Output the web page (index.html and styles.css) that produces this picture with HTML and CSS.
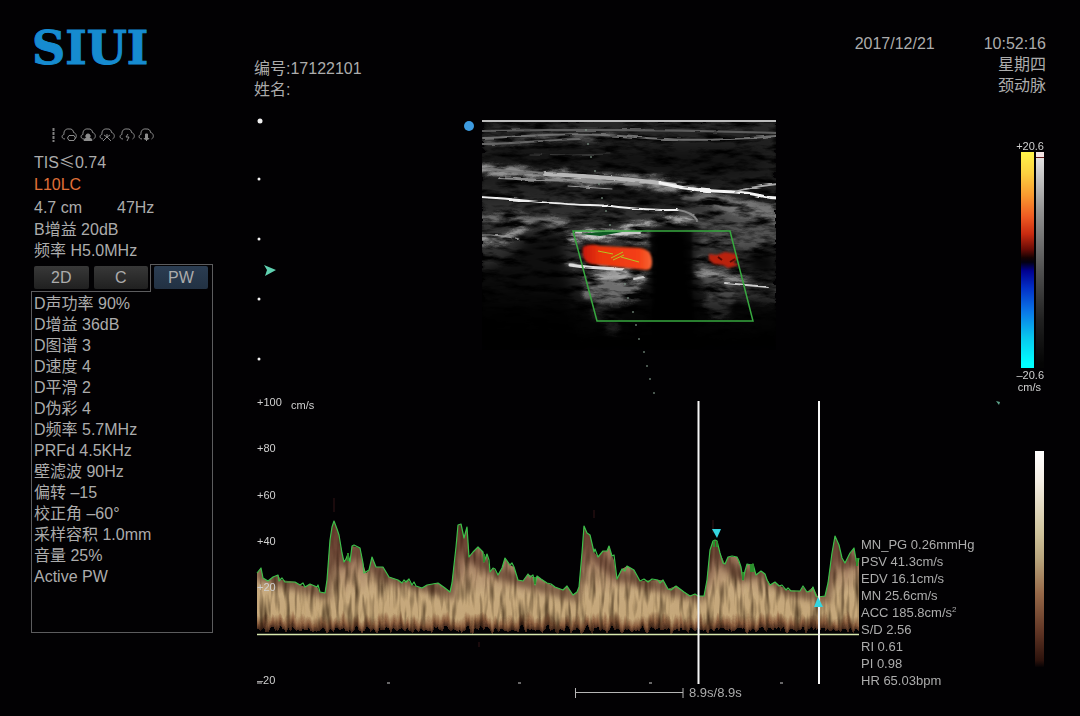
FILE: index.html
```html
<!DOCTYPE html>
<html lang="zh-CN">
<head>
<meta charset="utf-8">
<meta name="viewport" content="width=device-width, initial-scale=1">
<title>SIUI 颈动脉 PW</title>
<link rel="stylesheet" href="styles.css">
</head>
<body>
<div class="app">
  <aside class="sidebar">
    <div class="logo">SIUI</div>
    <svg class="status-icons" viewBox="0 0 106 16" width="106" height="16" aria-hidden="true">
      <defs>
        <path id="cloud" d="M4 12C0.500 12 0 8 3 7.500C2.500 3.500 5 1.500 8 2C11 1.500 12.500 3.500 12.500 5.500C15.500 6 16.500 10.500 13.500 12"/>
      </defs>
      <path class="grip" d="M2.500 1V15"/>
      <g class="icon-line">
        <g><use href="#cloud" x="10"/><path d="M18 8.500h5l1.500 2.500l-1.500 2.500h-5l-1.500 -2.500z"/></g>
        <g><use href="#cloud" x="29"/><path class="solid" d="M37 7a2 2 0 0 1 1.500 3.500l2.500 2v1h-8v-1l2.500-2a2 2 0 0 1 1.500-3.500z"/></g>
        <g><use href="#cloud" x="48"/><path d="M52 14l4 -4v-3M60 14l-4 -4M53 8l3 2l3 -2"/></g>
        <g><use href="#cloud" x="68"/><path d="M77 7l-2 3h3l-2 4"/></g>
        <g><use href="#cloud" x="87"/><path class="solid" d="M94.500 7h2v4h-2zM93 11c0 2 5 2 5 0M95.500 12v2"/></g>
      </g>
    </svg>
    <div class="probe">
      <p class="line">TIS<span class="wide">≤</span>0.74</p>
      <p class="line accent">L10LC</p>
      <p class="line pair"><span>4.7 cm</span><span>47Hz</span></p>
    </div>
    <p class="row">B增益 20dB</p>
    <p class="row">频率 H5.0MHz</p>
    <div class="tabs">
      <div class="tabs-idle">
        <button class="tab" type="button">2D</button>
        <button class="tab" type="button">C</button>
      </div>
      <div class="tabs-current">
        <button class="tab tab-on" type="button">PW</button>
      </div>
    </div>
    <div class="panel">
      <p class="row">D声功率 90%</p>
      <p class="row">D增益 36dB</p>
      <p class="row">D图谱 3</p>
      <p class="row">D速度 4</p>
      <p class="row">D平滑 2</p>
      <p class="row">D伪彩 4</p>
      <p class="row">D频率 5.7MHz</p>
      <p class="row">PRFd 4.5KHz</p>
      <p class="row">壁滤波 90Hz</p>
      <p class="row">偏转 –15</p>
      <p class="row">校正角 –60°</p>
      <p class="row">采样容积 1.0mm</p>
      <p class="row">音量 25%</p>
      <p class="row">Active PW</p>
    </div>
  </aside>

  <main class="main">
    <header class="header">
      <div class="patient">
        <p class="row">编号:17122101</p>
        <p class="row">姓名:</p>
      </div>
      <div class="exam">
        <p class="row stamp"><span>2017/12/21</span><span>10:52:16</span></p>
        <p class="row">星期四</p>
        <p class="row">颈动脉</p>
      </div>
    </header>

    <section class="scan">
      <svg class="scan-view" viewBox="253 112 747 284" role="img" aria-label="B+C">
        <defs>
          <filter id="tissue" x="482" y="120" width="294" height="240" filterUnits="userSpaceOnUse" color-interpolation-filters="sRGB">
            <feTurbulence type="fractalNoise" baseFrequency="0.04 0.14" numOctaves="5" seed="7" result="n"/>
            <feColorMatrix in="n" values="3 0 0 0 -0.750  3 0 0 0 -0.750  3 0 0 0 -0.750  0 0 0 0 1" result="g"/>
            <feGaussianBlur in="SourceGraphic" stdDeviation="2.200" result="b"/>
            <feDisplacementMap in="b" in2="n" scale="12" xChannelSelector="G" yChannelSelector="B" result="d"/>
            <feComposite in="d" in2="g" operator="arithmetic" k1="1.100" k2="0.050"/>
          </filter>
          <filter id="fascia" x="-5%" y="-30%" width="110%" height="160%" color-interpolation-filters="sRGB">
            <feTurbulence type="fractalNoise" baseFrequency="0.04 0.3" numOctaves="3" seed="3" result="n"/>
            <feGaussianBlur in="SourceGraphic" stdDeviation="0.600" result="b"/>
            <feDisplacementMap in="b" in2="n" scale="3" xChannelSelector="G" yChannelSelector="B"/>
          </filter>
          <filter id="soft"><feGaussianBlur stdDeviation="6"/></filter>
          <filter id="edge"><feGaussianBlur stdDeviation="0.800"/></filter>
          <linearGradient id="depth" x1="0" y1="0" x2="0" y2="1">
            <stop offset="0" stop-color="#242424"/><stop offset="0.120" stop-color="#1c1c1c"/>
            <stop offset="0.250" stop-color="#181818"/><stop offset="0.400" stop-color="#2a2a2a"/>
            <stop offset="0.650" stop-color="#2a2a2a"/><stop offset="0.850" stop-color="#0c0c0c"/>
            <stop offset="1" stop-color="#000"/>
          </linearGradient>
          <linearGradient id="flow" x1="0" y1="0" x2="1" y2="0">
            <stop offset="0" stop-color="#c81808"/><stop offset="0.250" stop-color="#ea360e"/>
            <stop offset="0.800" stop-color="#f43f15"/><stop offset="1" stop-color="#f56636"/>
          </linearGradient>
          <clipPath id="frame"><path d="M482 120H776V350H482Z"/></clipPath>
        </defs>

        <g clip-path="url(#frame)">
          <g filter="url(#tissue)">
            <path d="M482 120H776V345H482Z" fill="url(#depth)"/>
            <g fill="none" stroke-linecap="round">
              <path d="M482 170C520 170 540 178 600 180S660 184 690 190" stroke="#808080" stroke-width="10"/>
              <path d="M482 142C540 139 570 135 610 137" stroke="#555" stroke-width="5"/>
              <path d="M690 198Q730 205 776 216" stroke="#666" stroke-width="16"/>
              <path d="M690 212Q720 225 776 235" stroke="#484848" stroke-width="20"/>
              <path d="M482 238Q505 244 518 230T565 224" stroke="#888" stroke-width="7"/>
              <path d="M482 218Q525 214 560 228" stroke="#606060" stroke-width="8"/>
              <path d="M572 238Q612 231 650 238" stroke="#bbb" stroke-width="8"/>
              <path d="M622 230Q660 216 690 222" stroke="#bbb" stroke-width="5"/>
              <path d="M570 264Q610 266 645 276" stroke="#999" stroke-width="6"/>
              <path d="M586 278Q615 278 640 279" stroke="#909090" stroke-width="10"/>
              <path d="M592 290Q620 294 630 294" stroke="#606060" stroke-width="20"/>
              <path d="M600 310Q610 320 612 326" stroke="#333" stroke-width="16"/>
              <path d="M706 240Q745 238 760 250" stroke="#484848" stroke-width="14"/>
              <path d="M708 268Q725 284 718 305" stroke="#444" stroke-width="28"/>
              <path d="M698 273Q735 276 768 286" stroke="#999" stroke-width="4"/>
              <path d="M745 292H776" stroke="#2c2c2c" stroke-width="24"/>
            </g>
          </g>
          <g filter="url(#soft)" fill="#000">
            <path d="M650 228H690L696 340H648Z"/>
            <path d="M526 236L562 232L578 345H470V270Q515 265 526 236Z" opacity="0.700"/>
            <path d="M490 150H760V166L700 174L560 162H490Z" opacity="0.400"/>
            <path d="M745 252H776V276L750 272Z" opacity="0.850"/>
            <path d="M600 190L690 200L740 226L680 206L600 198Z" opacity="0.700"/>
            <path d="M640 300H790V360H470V310H580Z" opacity="0.500"/>
          </g>
          <path d="M650 231H692V318H655Z" fill="#000" opacity="0.600" filter="url(#edge)"/>
          <g filter="url(#fascia)" fill="none" stroke-linecap="round">
            <path d="M482 131Q630 128 776 133" stroke="#5c5c5c" stroke-width="2"/>
            <path d="M482 138C540 136 570 132 620 136S700 142 776 136" stroke="#707070" stroke-width="2"/>
            <path d="M482 144C520 144 540 140 580 139" stroke="#666" stroke-width="2"/>
            <path d="M530 154Q570 156 610 154" stroke="#383838" stroke-width="1"/>
            <path d="M482 168C515 172 540 174 565 175" stroke="#777" stroke-width="2"/>
            <path d="M500 178C540 181 580 180 625 182" stroke="#8c8c8c" stroke-width="2"/>
            <path d="M545 174C590 176 640 180 675 185" stroke="#b8b8b8" stroke-width="4"/>
            <path d="M660 183C690 190 710 191 735 192S760 198 778 198" stroke="#f4f4f4" stroke-width="3"/>
            <path d="M735 192Q750 187 778 184" stroke="#aaa" stroke-width="2"/>
            <path d="M480 197C520 199 560 205 590 205S620 210 678 210" stroke="#eee" stroke-width="2"/>
            <path d="M678 210Q692 212 697 220" stroke="#888" stroke-width="2"/>
            <path d="M570 265Q590 268 622 269" stroke="#ddd" stroke-width="3"/>
            <path d="M634 279L643 277M576 232L640 233M725 283L768 287" stroke="#ccc" stroke-width="2"/>
            <path d="M482 235Q500 234 519 240M568 186L612 189" stroke="#999" stroke-width="1"/>
          </g>
          <path d="M482 121H776" stroke="#bdbdbd" stroke-width="2"/>
          <path d="M580 234Q600 231 622 232L600 236Z" fill="#0c5a22"/>
        </g>

        <path d="M583 247Q590 243 600 246L640 248Q651 249 652 260Q653 270 646 270L592 264Q581 262 583 247Z" fill="url(#flow)" filter="url(#edge)"/>
        <path d="M709 254L717 255L725 252L736 254L738 259L733 262L739 265L728 268L723 265L714 264L709 260Z" fill="#b92010" filter="url(#edge)"/>
        <path d="M730 262l5 -3M718 257l4 3" stroke="#5a0a04" stroke-width="2"/>
        <path d="M598 251L613 254M621 257L639 262M611 258L623 252M613 260L624 255" fill="none" stroke="#b5c520" stroke-width="1"/>
        <path d="M573 231H730L753 321H597Z" fill="none" stroke="#37a83f" stroke-width="1.500"/>
        <path class="beam" d="M586 130h0M588 144h0M591 157h0M595 171h0M599 184h0M602 198h0M606 211h0M610 225h0M625 284h0M628 298h0M633 312h0M636 325h0M639 339h0M644 352h0M647 366h0M650 379h0M654 393h0"/>
        <g fill="#f0f0f0">
          <circle cx="260" cy="121" r="2.500"/><circle cx="259" cy="179" r="1.500"/><circle cx="259" cy="239" r="1.500"/>
          <circle cx="259" cy="299" r="1.500"/><circle cx="259" cy="359" r="1.500"/>
        </g>
        <circle cx="469" cy="126" r="5" fill="#3d9be0"/>
        <path d="M264 265L276 270L265 276L267 270Z" fill="#5fd0b0"/>
        <path d="M996 401l4 1l-1 3z" fill="#5fa48c"/>
      </svg>
      <div class="color-map">
        <span class="map-label">+20.6</span>
        <div class="map-bars"><div class="bar-velocity"></div><div class="bar-gray"></div></div>
        <span class="map-label">–20.6</span>
        <span class="map-label map-unit">cm/s</span>
      </div>
    </section>

    <section class="spectrum">
      <svg class="spectrum-view" viewBox="253 396 607 308" role="img" aria-label="PW">
        <defs>
          <linearGradient id="power" gradientUnits="userSpaceOnUse" x1="0" y1="520" x2="0" y2="632">
            <stop offset="0" stop-color="#7a4c3a"/><stop offset="0.400" stop-color="#94745a"/>
            <stop offset="0.650" stop-color="#b09670"/><stop offset="0.850" stop-color="#ae946c"/>
            <stop offset="0.930" stop-color="#7a5236"/><stop offset="1" stop-color="#2a140e"/>
          </linearGradient>
          <filter id="streaks" x="253" y="490" width="607" height="145" filterUnits="userSpaceOnUse" color-interpolation-filters="sRGB">
            <feTurbulence type="fractalNoise" baseFrequency="0.2 0.03" numOctaves="2" seed="11" result="n"/>
            <feColorMatrix in="n" values="1.300 0 0 0 0.280  1.400 0 0 0 0.220  1.500 0 0 0 0.150  0 0 0 0 1" result="g"/>
            <feDisplacementMap in="SourceGraphic" in2="n" scale="16" xChannelSelector="A" yChannelSelector="G" result="d"/>
            <feComposite in="d" in2="g" operator="arithmetic" k1="1.080" k2="0.050" result="c"/>
            <feComposite in="c" in2="d" operator="in" result="e"/>
            <feGaussianBlur in="e" stdDeviation="0.400"/>
          </filter>
          <clipPath id="under"><path d="M257 573L261 568L263 578L268 581L273 577L278 575L281 580L295 582L300 585L305 587L310 584L317 587L320 592L325 593L327 580L330 540L332 527L334 521L337 529L339 535L342 553L344 562L348 554L350 562L352 546L360 548L363 563L366 573L369 570L372 557L376 567L383 567L389 577L398 580L402 583L408 580L412 585L422 588L427 585L438 583L445 588L450 592L452 583L456 547L458 525L461 524L464 538L467 527L469 557L473 552L478 547L483 552L484 562L487 554L490 572L493 568L498 575L502 568L505 558L510 565L514 567L518 580L523 581L528 574L533 577L535 583L537 576L547 583L555 587L563 590L567 586L573 595L577 592L579 587L582 553L584 526L587 533L590 535L594 552L598 557L603 551L607 551L609 546L612 556L614 560L617 579L622 569L627 566L634 570L640 581L658 580L663 580L668 589L676 586L690 596L695 594L698 596L704 596L707 580L710 550L713 541L717 541L720 553L725 564L728 557L737 557L741 567L743 580L747 564L753 565L756 575L761 571L765 574L770 585L775 582L782 587L788 590L800 591L803 587L807 592L813 587L818 597L825 596L828 583L832 553L835 536L839 545L842 558L845 563L850 553L854 548L857 565L859 558V634H257Z"/></clipPath>
        </defs>

        <g clip-path="url(#under)">
          <path d="M240 500H875V630H240Z" fill="url(#power)" filter="url(#streaks)"/>
          <path d="M257 573L325 593L334 521L344 560L360 548L372 565L389 577L450 592L459 524L470 555L498 573L523 581L573 595L585 526L598 557L617 575L640 581L698 596L714 541L725 562L743 576L761 571L788 590L825 596L835 536L845 563L859 558" fill="none" stroke="#3e1c14" stroke-width="12" opacity="0.500" filter="blur(3px)"/>
        </g>
        <path class="trace" d="M257 573L261 568L263 578L268 581L273 577L278 575L279 581L282 578L285 582L295 582L300 585L303 583L305 587L310 584L317 587L318 585L320 592L325 593L327 580L330 540L332 527L334 521L337 529L339 535L342 553L344 562L346 559L348 554L350 562L352 546L354 545L360 548L363 563L364 573L369 570L372 557L376 567L383 567L389 577L398 580L402 583L404 580L406 582L409 579L412 585L414 582L416 586L422 588L427 585L438 583L445 588L450 592L452 583L456 547L458 525L461 524L464 538L467 527L469 557L473 552L478 547L483 552L484 562L487 554L489 560L490 572L493 568L495 569L498 575L502 568L505 558L510 565L512 563L514 567L518 580L523 581L528 574L530 577L533 575L535 585L537 576L541 579L547 583L551 584L555 587L563 590L567 586L573 595L577 592L579 587L582 553L584 526L587 533L590 535L594 552L595 549L598 557L603 551L607 551L609 546L612 556L614 555L617 579L622 569L625 571L627 566L634 570L640 581L644 579L648 582L652 579L658 580L660 583L663 580L668 589L671 590L676 586L684 592L690 596L695 594L698 596L704 596L707 580L710 550L713 541L715 540L717 541L720 553L723 563L725 564L728 557L732 556L737 557L739 561L741 567L743 580L745 571L747 564L751 565L753 564L756 575L761 571L765 574L767 580L770 585L775 582L779 586L782 585L786 590L788 588L791 591L800 591L803 586L807 592L811 591L813 587L816 596L818 597L825 596L828 583L832 553L835 536L839 545L842 558L845 563L850 553L854 548L857 565L859 558"/>
        <path d="M348 553V561M484 554V562M535 577V584M714 541V547M717 541V547M743 572V580M751 564V572M753 564V572M857 558V566" stroke="#2c8f2c" stroke-width="2"/>
        <path d="M334 498V512M594 510V518M713 520V533M479 642V647" stroke="#331416" stroke-width="1"/>
        <path d="M257 634.500H859" stroke="#d8e8ae" stroke-width="1.500"/>
        <path d="M257 683H262M387 683H390M518 683H521M649 683H652M780 683H783" stroke="#ccc" stroke-width="1"/>
        <path d="M698.500 401V684M819 401V684" stroke="#f6f6f6" stroke-width="2"/>
        <path d="M712 529H721L717 538Z" fill="#35d5e0"/>
        <path d="M814 607L818 597L823 607Z" fill="#35d5e0"/>
        <path d="M575.500 688V698M683 688V698M575 692.500H683" stroke="#b5b5b5" stroke-width="1"/>
        <g class="axis">
          <text x="257" y="406">+100</text><text x="291" y="409">cm/s</text>
          <text x="257" y="452">+80</text><text x="257" y="499">+60</text><text x="257" y="545">+40</text>
          <text x="257" y="591">+20</text><text x="257" y="684">–20</text>
        </g>
        <text class="duration" x="689" y="697">8.9s/8.9s</text>
      </svg>
      <div class="readings">
        <p class="reading">MN_PG 0.26mmHg</p>
        <p class="reading">PSV 41.3cm/s</p>
        <p class="reading">EDV 16.1cm/s</p>
        <p class="reading">MN 25.6cm/s</p>
        <p class="reading">ACC 185.8cm/s<sup>2</sup></p>
        <p class="reading">S/D 2.56</p>
        <p class="reading">RI 0.61</p>
        <p class="reading">PI 0.98</p>
        <p class="reading">HR 65.03bpm</p>
      </div>
      <div class="bar-power"></div>
    </section>
  </main>
</div>
</body>
</html>
```
FILE: styles.css
```css
* {
  box-sizing: border-box;
}

body {
  margin: 0;
  background: #020103;
  color: #acacac;
  font-family: "Liberation Sans", "Noto Sans CJK SC", sans-serif;
  font-size: 16px;
  line-height: 21px;
}

p {
  margin: 0;
}

.app {
  display: grid;
  grid-template-columns: 182px 1fr;
  column-gap: 40px;
  padding: 0 32px 12px 31px;
}

.sidebar {
  padding-top: 24px;
}

.logo {
  height: 48px;
  margin-bottom: 55px;
  padding-left: 1px;
  color: #168bd0;
  font-family: "DejaVu Serif", serif;
  font-size: 46px;
  font-weight: 700;
  line-height: 48px;
  -webkit-text-stroke: 1px #168bd0;
}

.status-icons {
  display: block;
  margin: 0 0 7px 20px;
}

.grip {
  stroke: #808080;
  stroke-width: 2;
  stroke-dasharray: 3 1;
}

.icon-line {
  fill: none;
  stroke: #8c8c8c;
  stroke-width: 1;
}

.solid {
  fill: #8c8c8c;
}

.line,
.row {
  padding-left: 3px;
  white-space: nowrap;
}

.line {
  height: 23px;
  line-height: 23px;
}

.wide {
  font-family: "Noto Sans CJK SC", sans-serif;
}

.accent {
  color: #e07038;
}

.pair {
  display: flex;
  gap: 35px;
}

.tabs {
  display: flex;
  margin-top: 3px;
}

.tabs-idle {
  display: flex;
  flex: 1;
  gap: 5px;
  padding: 2px 2px 2px 3px;
  border-bottom: 1px solid #5c5c5e;
}

.tabs-current {
  display: flex;
  width: 63px;
  padding: 1px 4px 3px 3px;
  border: 1px solid #5c5c5e;
  border-bottom: 0;
}

.tab {
  flex: 1;
  height: 23px;
  padding: 0;
  border: 0;
  border-radius: 2px;
  background: linear-gradient(#383838, #202020);
  color: #acacac;
  font: inherit;
}

.tab-on {
  background: linear-gradient(#2b3d52, #223143);
}

.panel {
  min-height: 341px;
  padding-top: 1px;
  border: 1px solid #5c5c5e;
  border-top: 0;
}

.panel .row {
  padding-left: 2px;
}

.header {
  display: flex;
  justify-content: space-between;
  height: 112px;
}

.patient {
  padding-top: 58px;
}

.patient .row {
  padding-left: 1px;
}

.exam {
  padding: 33px 2px 0 0;
  text-align: right;
}

.stamp {
  display: flex;
  gap: 49px;
}

.scan {
  display: grid;
  grid-template-columns: 1fr 48px;
}

.scan-view,
.spectrum-view {
  display: block;
  width: 100%;
  overflow: visible;
}

.beam {
  fill: none;
  stroke: #809888;
  stroke-width: 1.500;
  stroke-linecap: square;
}

.color-map {
  display: flex;
  flex-direction: column;
  align-items: flex-end;
  padding: 28px 4px 0 0;
}

.map-label {
  color: #d0d0d0;
  font-size: 11px;
  line-height: 12px;
}

.map-unit {
  padding-right: 3px;
}

.map-bars {
  display: flex;
  gap: 2px;
  height: 216px;
  margin-bottom: 1px;
}

.bar-velocity {
  width: 13px;
  background: linear-gradient(#fff34a 0%, #fcd040 10%, #f99a30 20%, #ee5a22 30%, #c82a10 38%, #6a0c06 45%, #140202 49%, #020010 51%, #000090 55%, #0330c8 63%, #0a78e8 74%, #08c8ee 86%, #00ffff 98%);
}

.bar-gray {
  width: 8px;
  background: linear-gradient(#f4e4e4 0 5px, #601818 5px 6px, #e0e0e0 6px, #909090 28%, #505050 55%, #202020 78%, #040404 98%);
}

.spectrum {
  display: grid;
  grid-template-columns: 1fr 130px 58px;
}

.axis {
  fill: #d0d0d0;
  font-size: 11px;
}

.trace {
  fill: none;
  stroke: #3cc04a;
  stroke-width: 1.200;
  stroke-linejoin: round;
}

.duration {
  fill: #acacac;
  font-size: 13px;
}

.readings {
  padding: 140px 0 0 1px;
}

.reading {
  height: 17px;
  font-size: 13px;
  line-height: 17px;
  white-space: nowrap;
}

.reading sup {
  font-size: 8px;
  line-height: 8px;
}

.bar-power {
  justify-self: end;
  width: 9px;
  height: 216px;
  margin: 55px 4px 0 0;
  background: linear-gradient(#fff 0%, #f4eee4 14%, #cfc39c 38%, #b8a47c 50%, #966848 66%, #5f3424 84%, #2c120c 97%, #060204 100%);
}
```
